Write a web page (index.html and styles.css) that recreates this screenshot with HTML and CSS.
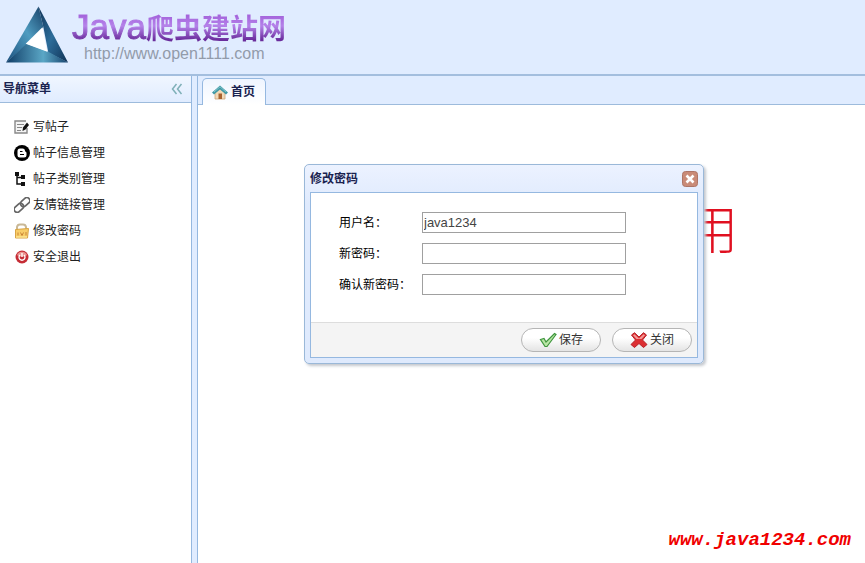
FILE: index.html
```html
<!DOCTYPE html>
<html lang="zh-CN">
<head>
    <meta charset="UTF-8" />
    <meta name="viewport" content="width=device-width, initial-scale=1.0"/>
    <title>Java爬虫建站网</title>
    <link rel="stylesheet" href="styles.css">
</head>
<body>
    <header class="top">
        <svg class="logo" viewBox="0 0 64 58" aria-hidden="true">
            <defs>
                <linearGradient id="left" x1="0" y1="1" x2="1" y2="0">
                    <stop offset="0" stop-color="#1b4f7d"/>
                    <stop offset=".55" stop-color="#4f9cc0"/>
                    <stop offset="1" stop-color="#153e66"/>
                </linearGradient>
                <linearGradient id="right" x1="0" y1="0" x2="1" y2="1">
                    <stop offset="0" stop-color="#123558"/>
                    <stop offset=".5" stop-color="#2c6c99"/>
                    <stop offset="1" stop-color="#0f3154"/>
                </linearGradient>
                <linearGradient id="base" x1="0" y1="0" x2="1" y2="0">
                    <stop offset="0" stop-color="#0f3c66"/>
                    <stop offset=".6" stop-color="#5ba7c6"/>
                    <stop offset="1" stop-color="#16426c"/>
                </linearGradient>
            </defs>
            <path d="M33 0 L0 57 L21 39 L38 21 Z" fill="url(#left)"/>
            <path d="M33 0 L63 57 L43 47 L38 21 Z" fill="url(#right)"/>
            <path d="M0 57 L21 38 L43 46 L63 57 Z" fill="url(#base)"/>
            <path d="M37 21 L42 46 L20 38 Z" fill="#fff"/>
        </svg>
        <div class="brand">
            <div class="site-name"><span class="latin">Java</span>爬虫建站网</div>
            <div class="site-url">http://www.open1111.com</div>
        </div>
    </header>

    <div class="layout">
        <aside class="sidebar">
            <div class="panel-header">
                <h2>导航菜单</h2>
                <button class="collapse" type="button" aria-label="收起">
                    <svg viewBox="0 0 12 12" width="12" height="12"><path d="M5.500 1 L1.500 6 L5.500 11 M10.500 1 L6.500 6 L10.500 11" fill="none" stroke="#7fb0b8" stroke-width="1.500"/></svg>
                </button>
            </div>
            <nav class="menu">
                <a href="#">
                    <svg viewBox="0 0 16 16"><path d="M12 2H1v12h12V9" fill="#f4f4f4" stroke="#888" stroke-width="1.400"/><path d="M3 5.500h7M3 8.500h5M3 11.500h4" stroke="#888"/><path d="M13 3.500 L9 8.500 L8.500 12 L11.500 10.500 L15 6Z" fill="#111"/></svg>
                    写帖子
                </a>
                <a href="#">
                    <svg viewBox="0 0 16 16"><circle cx="8" cy="8" r="8" fill="#000"/><path d="M6 3.500h2.500a2.500 2.500 0 0 1 2.500 2.500c0 1 1.500.5 1.500 2v2a2.500 2.500 0 0 1-2.500 2.500H6A2.500 2.500 0 0 1 3.500 10V6A2.500 2.500 0 0 1 6 3.500Z" fill="#fff"/><path d="M6 6.500h2.500M6 9.500h4" stroke="#000" stroke-width="1.200"/></svg>
                    帖子信息管理
                </a>
                <a href="#">
                    <svg viewBox="0 0 16 16"><path d="M1 1h4v4H1zM7 4h4v4H7zM7 11h4v4H7z" fill="#111"/><path d="M3 4v9h5M3 6.500h5" fill="none" stroke="#111" stroke-width="1.500"/></svg>
                    帖子类别管理
                </a>
                <a href="#">
                    <svg viewBox="0 0 16 16"><g transform="rotate(-42 8 8)" fill="none" stroke="#666" stroke-width="1.700"><rect x="-1.500" y="5" width="10.500" height="6" rx="3"/><rect x="7" y="5" width="10.500" height="6" rx="3"/></g></svg>
                    友情链接管理
                </a>
                <a href="#">
                    <svg viewBox="0 0 16 16"><path d="M3 7V4a3 3 0 0 1 3-2.500h3a3 3 0 0 1 3 2.500v3" fill="none" stroke="#c9b896" stroke-width="2"/><path d="M1.500 6.500 L14.500 5.500 L13.500 15 H1.500Z" fill="#f8cd68" stroke="#d9a444"/><path d="M4 9.500v3M6.500 9.500l1.500 3 1.500-3M12 9v3.500" fill="none" stroke="#c98336"/><path d="M2 14h11" stroke="#fff0a5"/></svg>
                    修改密码
                </a>
                <a href="#">
                    <svg viewBox="0 0 16 16"><circle cx="8" cy="8" r="6.500" fill="#c52d36"/><path d="M3 6a5.500 5.500 0 0 1 10 0c-2 2-8 2-10 0Z" fill="#ea9490"/><path d="M6 6a3 3 0 1 0 4 0M8 4v4" fill="none" stroke="#fff" stroke-width="1.300"/></svg>
                    安全退出
                </a>
            </nav>
        </aside>

        <main class="content">
            <div class="tabs">
                <a class="tab" href="#">
                    <svg viewBox="0 0 16 16"><path d="M3 8 L8 4 L13 8 V15 H3Z" fill="#f1d9b8" stroke="#cda37a" stroke-width=".8"/><path d="M6.500 9.500h3.500V15H6.500Z" fill="#a8622f"/><path d="M0 8.500 L8 1.500 L16 8.500 L14 10.500 L8 5.500 L2 10.500Z" fill="#3f98a5"/><path d="M2 8 L8 2.800 L14 8" fill="none" stroke="#83c6cc"/></svg>
                    首页
                </a>
            </div>
            <div class="welcome">用</div>
        </main>
    </div>

    <form class="window" role="dialog" aria-labelledby="window-title">
        <div class="window-header">
            <h2 id="window-title">修改密码</h2>
            <button class="window-close" type="button" aria-label="关闭窗口">
                <svg viewBox="0 0 16 16" width="16" height="16"><rect x=".5" y=".5" width="15" height="15" rx="3" fill="#c98b78" stroke="#ad7567"/><path d="M4.500 4.500 L11.500 11.500 M11.500 4.500 L4.500 11.500" stroke="#fff" stroke-width="2.600"/></svg>
            </button>
        </div>
        <div class="window-body">
            <div class="fields">
                <label for="userName">用户名：</label>
                <input type="text" id="userName" value="java1234" readonly />
                <label for="newPassword">新密码：</label>
                <input type="password" id="newPassword" />
                <label for="newPassword2">确认新密码：</label>
                <input type="password" id="newPassword2" />
            </div>
            <div class="buttons">
                <button class="btn" type="button">
                    <svg viewBox="0 0 18 16"><path d="M1.500 7.500 L5 6.500 L7 10 L15.500 1.500 L17 2.500 L8 14.500 H6Z" fill="#b9e5a5" stroke="#3e963d" stroke-width="1.200"/></svg>
                    保存
                </button>
                <button class="btn" type="button">
                    <svg viewBox="0 0 18 16"><path d="M1.500 3 L4.500 .7 L9 5 L13.500 .7 L16.500 3 L12.500 8 L17 12.500 L13.500 15.500 L9 11.500 L4.500 15.500 L1 12.500 L5.500 8Z" fill="#dc2f32" stroke="#b51f27"/><path d="M3 3.200 L4.500 2.200 L9 6.500 L13.500 2.200 L15 3.200 L11.500 7 H6.500Z" fill="#f39a98"/></svg>
                    关闭
                </button>
            </div>
        </div>
    </form>

    <div class="watermark">www.java1234.com</div>
</body>
</html>
```

FILE: styles.css
```css
* {
    box-sizing: border-box;
}
body {
    display: flex;
    flex-direction: column;
    min-height: 100vh;
    margin: 0;
    background-color: #ffffff;
    font-family: "Liberation Sans", "Noto Sans CJK SC", sans-serif;
    font-size: 12px;
    line-height: 16px;
    color: #222222;
}
h2 {
    margin: 0;
    font-size: 12px;
    line-height: 16px;
    color: #1a2350;
}
button {
    padding: 0;
    border: none;
    background: none;
    font: inherit;
    cursor: pointer;
}
a {
    color: inherit;
    text-decoration: none;
}
svg {
    display: block;
    flex: none;
}

/* top */
.top {
    display: flex;
    gap: 3px;
    height: 76px;
    padding: 6px 6px 0;
    background-color: #e0ecff;
    border-bottom: 2px solid #a3bede;
}
.logo {
    width: 63px;
    height: 58px;
}
.site-name {
    display: flex;
    align-items: baseline;
    height: 40px;
    font-size: 28px;
    line-height: 42px;
    font-weight: 700;
    color: transparent;
    background: linear-gradient(#a565dc 25%, #b583ea 50%, #6a2c9c 85%);
    background-clip: text;
    -webkit-background-clip: text;
}
.latin {
    font-size: 35px;
    font-weight: 400;
    -webkit-text-stroke: 1px transparent;
}
.site-url {
    padding-left: 12px;
    font-size: 16px;
    color: #929baa;
}

/* layout */
.layout {
    display: flex;
    flex: 1;
    gap: 5px;
    background-color: #e0ecff;
}
.sidebar {
    width: 192px;
    background-color: #ffffff;
    border-right: 1px solid #95b8e0;
}
.panel-header {
    display: flex;
    align-items: center;
    justify-content: space-between;
    height: 27px;
    padding: 0 8px 0 3px;
    background: linear-gradient(#f0f6ff, #e0ecff);
    border-bottom: 1px solid #9dbbdc;
}
.menu {
    padding: 11px 14px;
}
.menu a {
    display: flex;
    align-items: center;
    gap: 3px;
    height: 26px;
}
.menu svg {
    width: 16px;
    height: 16px;
}
.content {
    flex: 1;
    background-color: #ffffff;
    border-left: 1px solid #95b8e0;
}
.tabs {
    display: flex;
    align-items: flex-end;
    height: 29px;
    padding-left: 4px;
    background-color: #e0ecff;
    border-bottom: 1px solid #9dbbdc;
}
.tab {
    display: flex;
    align-items: center;
    gap: 3px;
    height: 27px;
    margin-bottom: -1px;
    padding: 0 10px 0 9px;
    background: linear-gradient(#eff5ff, #ffffff);
    border: 1px solid #95b8e0;
    border-bottom: none;
    border-radius: 5px 5px 0 0;
    font-weight: bold;
    color: #1a2350;
}
.tab svg {
    width: 16px;
    height: 16px;
}
.welcome {
    padding: 92px 19% 0 0;
    font-family: "Noto Sans CJK SC", sans-serif;
    font-size: 52px;
    line-height: 60px;
    font-weight: 300;
    text-align: right;
    color: #e01020;
}

/* window */
.window {
    position: absolute;
    top: 164px;
    left: 304px;
    width: 400px;
    padding: 0 5px 5px;
    background: linear-gradient(#ecf2ff, #dfeafd 20%);
    border: 1px solid #9ab8d8;
    border-radius: 5px;
    box-shadow: 2px 2px 3px #c4c8ce;
}
.window-header {
    display: flex;
    align-items: center;
    justify-content: space-between;
    height: 27px;
}
.window-body {
    background-color: #ffffff;
    border: 1px solid #95b8e0;
}
.fields {
    display: grid;
    grid-template-columns: 75px 204px;
    align-items: center;
    gap: 10px 8px;
    padding: 19px 28px 27px;
    color: #000000;
}
.fields input {
    height: 21px;
    padding: 0 1px;
    border: 1px solid #a0a0a0;
    border-radius: 0;
    outline: none;
    font-family: "Liberation Sans", sans-serif;
    font-size: 13px;
    color: #444444;
}
.buttons {
    display: flex;
    justify-content: flex-end;
    gap: 11px;
    padding: 5px;
    background-color: #f4f4f4;
    border-top: 1px solid #dddddd;
}
.btn {
    display: flex;
    align-items: center;
    justify-content: center;
    gap: 2px;
    width: 80px;
    height: 24px;
    border: 1px solid #b5b5b5;
    border-radius: 12px;
    background: linear-gradient(#ffffff 40%, #e4e4e4);
    color: #333333;
}
.btn svg {
    width: 18px;
    height: 16px;
}

.watermark {
    position: absolute;
    right: 14px;
    bottom: 12px;
    font-family: "Liberation Mono", monospace;
    font-size: 19px;
    line-height: 22px;
    font-weight: bold;
    font-style: italic;
    color: #f00000;
}
```
